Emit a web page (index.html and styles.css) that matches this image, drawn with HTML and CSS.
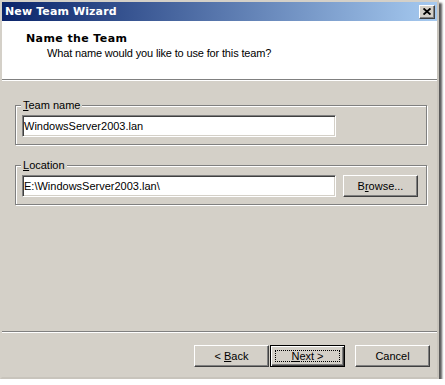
FILE: index.html
```html
<!DOCTYPE html>
<html>
<head>
<meta charset="utf-8">
<link rel="stylesheet" href="styles.css">
</head>
<body>
<div class="window">
  <div class="titlebar">
    <span class="title-text">New Team Wizard</span>
    <span class="close-btn"><svg width="8" height="7" viewBox="0 0 8 7"><path d="M0.5 0.5L7.5 6.5M7.5 0.5L0.5 6.5" stroke="#000" stroke-width="1.9" fill="none"/></svg></span>
  </div>
  <div class="header">
    <div class="h-title">Name the Team</div>
    <div class="h-sub">What name would you like to use for this team?</div>
  </div>
  <div class="content">
    <div class="group">
      <span class="legend"><u>T</u>eam name</span>
      <div class="row">
        <input class="field" type="text" value="WindowsServer2003.lan">
      </div>
    </div>
    <div class="group group-2">
      <span class="legend"><u>L</u>ocation</span>
      <div class="row">
        <input class="field" type="text" value="E:\WindowsServer2003.lan\">
        <button class="btn">B<u>r</u>owse...</button>
      </div>
    </div>
    <div class="spacer"></div>
    <div class="footer">
      <button class="btn">&lt; <u>B</u>ack</button>
      <button class="btn btn-default"><u>N</u>ext &gt;</button>
      <button class="btn btn-cancel">Cancel</button>
    </div>
  </div>
</div>
</body>
</html>
```

FILE: styles.css
```css
* { box-sizing: border-box; }
html, body { margin: 0; padding: 0; }
body {
  background: #ffffff;
  font-family: "Liberation Sans", Arial, sans-serif;
  font-size: 11px;
  color: #000;
}
.window {
  width: 439px;
  height: 379px;
  border: 2px solid #d4d0c8;
  border-right-color: #c8c4bc;
  border-bottom-color: #c8c4bc;
  background: #d4d0c8;
  box-shadow: 3px 3px 2px rgba(0,0,0,0.65);
  display: flex;
  flex-direction: column;
}
.titlebar {
  height: 19px;
  flex: none;
  display: flex;
  align-items: center;
  justify-content: space-between;
  padding: 0 2px 0 3px;
  background: linear-gradient(to right, #0a246a, #a6caf0);
}
.title-text {
  color: #fff;
  font-family: "DejaVu Sans", "Liberation Sans", sans-serif;
  font-weight: bold;
  font-size: 11px;
  line-height: 19px;
  letter-spacing: 0.12px;
}
.close-btn {
  width: 16px;
  height: 14px;
  background: #d4d0c8;
  border: 1px solid;
  border-color: #fff #404040 #404040 #fff;
  box-shadow: inset -1px -1px #808080;
  display: flex;
  align-items: center;
  justify-content: center;
  padding-bottom: 1px;
}
.close-btn svg { display: block; }
.header {
  height: 59px;
  flex: none;
  background: #fff;
  border-bottom: 1px solid #808080;
  padding: 11px 0 0 24px;
}
.h-title {
  font-family: "DejaVu Sans", "Liberation Sans", sans-serif;
  font-weight: bold;
  font-size: 11px;
  line-height: 13px;
  letter-spacing: 0.4px;
}
.h-sub {
  margin-top: 2px;
  margin-left: 21px;
  line-height: 13px;
  letter-spacing: -0.15px;
}
.content {
  flex: 1;
  display: flex;
  flex-direction: column;
  border-top: 1px solid #fff;
}
.group {
  position: relative;
  width: 412px;
  margin: 24px 0 0 13px;
  border: 1px solid #808080;
  box-shadow: inset 1px 1px #fff, 1px 1px #fff;
  padding: 9px 7px 7px 6px;
}
.group-2 { margin-top: 20px; }
.legend {
  position: absolute;
  top: -7px;
  left: 5px;
  padding: 0 2px;
  line-height: 13px;
  background: #d4d0c8;
}
.row {
  display: flex;
  gap: 7px;
}
.field {
  width: 314px;
  height: 22px;
  margin: 0;
  padding: 0 0 1px 1px;
  font-family: inherit;
  font-size: 11px;
  color: #000;
  background: #fff;
  border: 1px solid;
  border-color: #808080 #fff #fff #808080;
  box-shadow: inset 1px 1px #404040, inset -1px -1px #d4d0c8;
  outline: none;
}
.btn {
  position: relative;
  width: 75px;
  height: 22px;
  margin: 0;
  padding: 0 0 1px;
  font-family: inherit;
  font-size: 11px;
  color: #000;
  background: #d4d0c8;
  border: 1px solid;
  border-color: #fff #404040 #404040 #fff;
  box-shadow: inset -1px -1px #808080;
}
.spacer { flex: 1; }
.footer {
  flex: none;
  border-top: 1px solid #808080;
  box-shadow: inset 0 1px #fff;
  padding: 13px 7px 10px 0;
  display: flex;
  justify-content: flex-end;
  gap: 1px;
}
.btn-default {
  border: 1px solid #000;
  box-shadow: inset 1px 1px #fff, inset -1px -1px #404040, inset -2px -2px #808080;
}
.btn-default::after {
  content: "";
  position: absolute;
  left: 4px;
  top: 4px;
  right: 4px;
  bottom: 4px;
  border: 1px dotted #000;
}
.btn-cancel { margin-left: 9px; }
```
